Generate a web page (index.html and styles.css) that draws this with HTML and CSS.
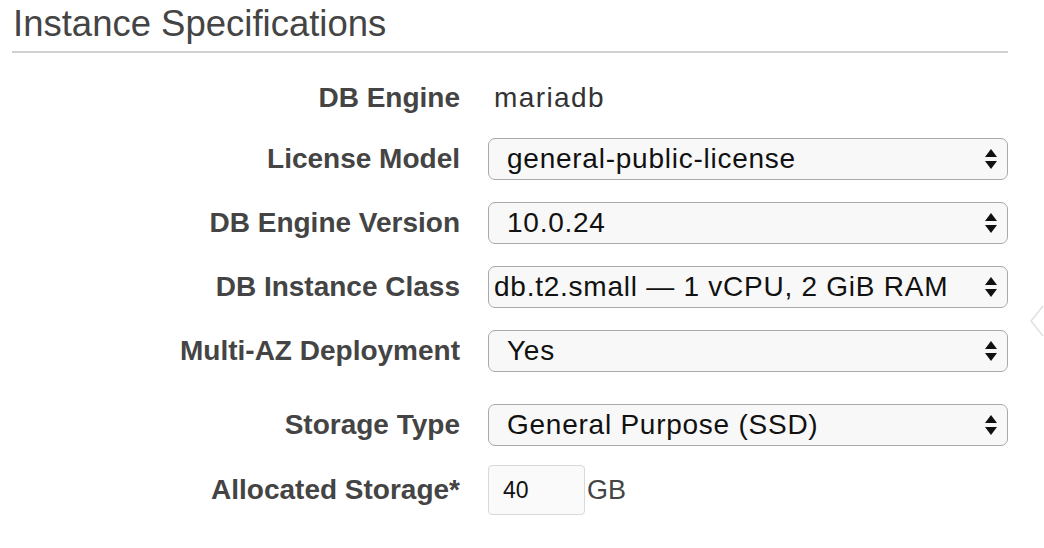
FILE: index.html
```html
<!DOCTYPE html>
<html>
<head>
<meta charset="utf-8">
<link rel="stylesheet" href="styles.css">
</head>
<body>
<div class="page">
  <h1 class="title">Instance Specifications</h1>
  <div class="form">
    <div class="row row-text">
      <div class="label">DB Engine</div>
      <div class="value">mariadb</div>
    </div>
    <div class="row">
      <div class="label">License Model</div>
      <div class="select"><span>general-public-license</span><svg class="arrows" width="12" height="20" viewBox="0 0 12 20"><polygon points="6,0 12,8 0,8"/><polygon points="0,12 12,12 6,20"/></svg></div>
    </div>
    <div class="row">
      <div class="label">DB Engine Version</div>
      <div class="select"><span>10.0.24</span><svg class="arrows" width="12" height="20" viewBox="0 0 12 20"><polygon points="6,0 12,8 0,8"/><polygon points="0,12 12,12 6,20"/></svg></div>
    </div>
    <div class="row">
      <div class="label">DB Instance Class</div>
      <div class="select select-tight"><span>db.t2.small — 1 vCPU, 2 GiB RAM</span><svg class="arrows" width="12" height="20" viewBox="0 0 12 20"><polygon points="6,0 12,8 0,8"/><polygon points="0,12 12,12 6,20"/></svg></div>
    </div>
    <div class="row">
      <div class="label">Multi-AZ Deployment</div>
      <div class="select"><span>Yes</span><svg class="arrows" width="12" height="20" viewBox="0 0 12 20"><polygon points="6,0 12,8 0,8"/><polygon points="0,12 12,12 6,20"/></svg></div>
    </div>
    <div class="row row-spaced">
      <div class="label">Storage Type</div>
      <div class="select"><span>General Purpose (SSD)</span><svg class="arrows" width="12" height="20" viewBox="0 0 12 20"><polygon points="6,0 12,8 0,8"/><polygon points="0,12 12,12 6,20"/></svg></div>
    </div>
    <div class="row row-input">
      <div class="label">Allocated Storage*</div>
      <div class="input-group"><div class="input">40</div><span class="unit">GB</span></div>
    </div>
  </div>
  <svg class="chevron" width="14" height="32" viewBox="0 0 14 32"><polyline points="13,1 1,16 13,31" fill="none" stroke="#e0e0e0" stroke-width="1.5"/></svg>
</div>
</body>
</html>
```
FILE: styles.css
```css
html, body {
  margin: 0;
  padding: 0;
  background: #fff;
}
body {
  font-family: "Liberation Sans", Arial, Helvetica, sans-serif;
  width: 1044px;
  height: 548px;
  overflow: hidden;
}
.page {
  position: relative;
  padding: 4px 36px 0 12px;
}
.title {
  margin: 0;
  font-size: 36.5px;
  font-weight: normal;
  line-height: 40px;
  color: #444;
  padding: 0 0 7px 1px;
  border-bottom: 2px solid #d0d0d0;
}
.form {
  display: flex;
  flex-direction: column;
  padding-top: 27px;
}
.row {
  display: grid;
  grid-template-columns: 448px 520px;
  column-gap: 28px;
  align-items: center;
  height: 42px;
  margin-top: 22px;
}
.row-text {
  height: 36px;
  margin-top: 0;
}
.row-spaced {
  margin-top: 32px;
}
.row-input {
  height: 50px;
  margin-top: 19px;
}
.label {
  justify-self: end;
  font-weight: bold;
  font-size: 28px;
  color: #444;
  white-space: nowrap;
}
.value {
  font-size: 28px;
  color: #333;
  padding-left: 6px;
  letter-spacing: 1.4px;
}
.select {
  position: relative;
  box-sizing: border-box;
  height: 42px;
  border: 1.5px solid #a9a9a9;
  border-radius: 7px;
  background: #f8f8f8;
  display: flex;
  align-items: center;
  padding-left: 18px;
  font-size: 28px;
  color: #111;
  letter-spacing: 0.75px;
  white-space: nowrap;
}
.select-tight {
  padding-left: 5px;
}
.arrows {
  position: absolute;
  right: 10px;
  top: 10px;
  fill: #111;
}
.input-group {
  display: flex;
  align-items: center;
  height: 50px;
}
.input {
  box-sizing: border-box;
  width: 97px;
  height: 50px;
  border: 1.5px solid #d9d9d9;
  border-radius: 4px;
  background: #fafafa;
  font-size: 23px;
  color: #111;
  display: flex;
  align-items: center;
  padding-left: 14px;
}
.unit {
  font-size: 27px;
  color: #444;
  padding-left: 2px;
}
.chevron {
  position: absolute;
  left: 1030px;
  top: 305px;
}
```
